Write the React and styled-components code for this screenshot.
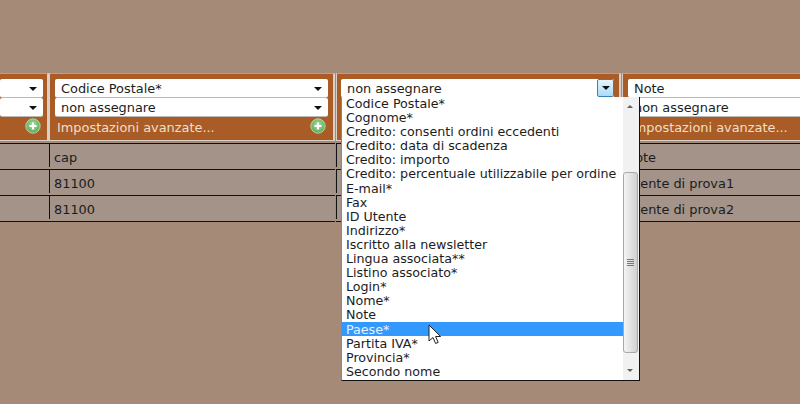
import styled, { createGlobalStyle } from "styled-components";

const GlobalStyle = createGlobalStyle`
  html, body {
    margin: 0;
    padding: 0;
    background: #a58b77;
  }
`;

const Page = styled.div`
  width: 800px;
  height: 404px;
  padding-top: 73px;
  box-sizing: border-box;
  overflow: hidden;
  font-family: "DejaVu Sans", Verdana, sans-serif;
  font-size: 12.9px;
  color: #1c1c1c;
`;

const Table = styled.div`
  position: relative;
  display: grid;
  grid-template-columns: 49px 286px 286px 179px;
  width: 800px;
`;

const Column = styled.div`
  display: flex;
  flex-direction: column;
  min-width: 0;
  overflow: hidden;
  padding-left: ${(p) => (p.$indent ? "1px" : "0")};
`;

const Head = styled.div`
  height: 68px;
  box-sizing: border-box;
  border-top: 1px solid #b0a296;
  border-bottom: 1px solid #d8d0c8;
  border-right: 2px solid #d8d0c8;
  border-left: ${(p) => (p.$first ? "none" : "1px solid #d8d0c8")};
  margin-right: ${(p) => (p.$last ? "-40px" : "0")};
  background: #a95c26;
  padding: 5px 5px 0;
  ${(p) => p.$first && "padding: 5px 4px 0 0;"}
  ${(p) => p.$open && "padding-left: 4px;"}
`;

const Select = styled.div`
  display: flex;
  align-items: center;
  justify-content: space-between;
  height: 18px;
  box-sizing: border-box;
  margin-bottom: 1px;
  padding: 1px 6px 0;
  background: #fff;
  border-radius: 2px;
  box-shadow: 0 1px 0 #bdb8b4;
  white-space: nowrap;
  overflow: hidden;
`;

const Caret = styled.span`
  margin-left: auto;
  width: 0;
  height: 0;
  border-left: 4px solid transparent;
  border-right: 4px solid transparent;
  border-top: 4px solid #111;
`;

const OpenButton = styled.span`
  display: flex;
  align-items: center;
  justify-content: center;
  width: 17px;
  height: 18px;
  margin: -1px -6px 0 auto;
  border: 1px solid #3c7fb1;
  border-radius: 2px;
  box-sizing: border-box;
  background: linear-gradient(#e6f5fc, #a9dbf6);

  ${Caret} {
    margin-left: 0;
  }
`;

const Advanced = styled.div`
  display: flex;
  align-items: center;
  justify-content: space-between;
  height: 20px;
  padding: 0 2px;
  color: #f1dfc9;
  white-space: nowrap;

  svg {
    margin: -2px 0 0 auto;
  }
`;

const Rows = styled.div`
  padding-top: 2px;
  border-bottom: 1px solid #111;
`;

const Cell = styled.div`
  height: 26px;
  box-sizing: border-box;
  padding: 2px 0 0 5px;
  display: flex;
  align-items: center;
  background: ${(p) =>
    p.$first
      ? "#a39389"
      : "linear-gradient(#111, #111) left top / 1px calc(100% - 2px) no-repeat, #a39389"};
  border-top: 1px solid #111;
  white-space: nowrap;
`;

const Dropdown = styled.div`
  position: absolute;
  left: 341px;
  top: 24px;
  width: 299px;
  height: 284px;
  box-sizing: border-box;
  display: flex;
  background: #fff;
  border: 1px solid #111;
  border-top: none;
  border-left-color: #888;
  font-size: 12.66px;
`;

const List = styled.div`
  flex: 1;
  min-width: 0;
  margin-top: -1px;
`;

const Item = styled.div`
  height: 14.1px;
  line-height: 16px;
  padding-left: 4px;
  white-space: nowrap;
  background: ${(p) => (p.$active ? "#3399ff" : "transparent")};
  color: ${(p) => (p.$active ? "#e8f2ff" : "#1c1c1c")};
`;

const Scrollbar = styled.div`
  position: relative;
  width: 16px;
  background: #f1f1f1;
`;

const Arrow = styled.span`
  position: absolute;
  left: 4px;
  ${(p) => (p.$up ? "top: 8px;" : "bottom: 8px;")}
  width: 0;
  height: 0;
  border-left: 3.5px solid transparent;
  border-right: 3.5px solid transparent;
  ${(p) => (p.$up ? "border-bottom" : "border-top")}: 3.5px solid #606060;
`;

const Thumb = styled.div`
  position: absolute;
  left: 0;
  right: 1px;
  top: 75px;
  height: 181px;
  border: 1px solid #a8a8a8;
  border-radius: 3px;
  box-sizing: border-box;
  background: linear-gradient(90deg, #f4f4f4, #d0d0d0);
  display: flex;
  flex-direction: column;
  align-items: center;
  justify-content: center;
  gap: 1px;
`;

const Grip = styled.span`
  width: 7px;
  height: 1px;
  background: #777;
`;

const Cursor = styled.svg`
  position: absolute;
  left: 428px;
  top: 251px;
`;

const PlusIcon = () => (
  <svg width="16" height="16" viewBox="0 0 16 16">
    <defs>
      <radialGradient id="plusg" cx="50%" cy="40%" r="60%">
        <stop offset="0" stopColor="#a5dc9c" />
        <stop offset="1" stopColor="#5aaa58" />
      </radialGradient>
    </defs>
    <circle cx="8" cy="8" r="7.2" fill="url(#plusg)" stroke="#c8e4bf" strokeWidth="0.8" />
    <path d="M8 4.500v7M4.500 8h7" stroke="#fff" strokeWidth="2.2" />
  </svg>
);

const options = [
  "Codice Postale*",
  "Cognome*",
  "Credito: consenti ordini eccedenti",
  "Credito: data di scadenza",
  "Credito: importo",
  "Credito: percentuale utilizzabile per ordine",
  "E-mail*",
  "Fax",
  "ID Utente",
  "Indirizzo*",
  "Iscritto alla newsletter",
  "Lingua associata**",
  "Listino associato*",
  "Login*",
  "Nome*",
  "Note",
  "Paese*",
  "Partita IVA*",
  "Provincia*",
  "Secondo nome",
];

const columns = [
  { first: true, head: "", cells: ["", "", ""] },
  { head: "Codice Postale*", cells: ["cap", "81100", "81100"] },
  { head: "non assegnare", open: true, indent: true, cells: ["", "", ""] },
  { head: "Note", last: true, indent: true, cells: ["note", "utente di prova1", "utente di prova2"] },
];

export default function App() {
  return (
    <Page>
      <GlobalStyle />
      <Table>
        {columns.map((col, i) => (
          <Column key={i} $indent={col.indent}>
            <Head $first={col.first} $last={col.last} $open={col.open}>
              <Select>
                {col.head}
                {col.open ? (
                  <OpenButton>
                    <Caret />
                  </OpenButton>
                ) : (
                  <Caret />
                )}
              </Select>
              <Select>
                {!col.first && !col.open && "non assegnare"}
                <Caret />
              </Select>
              {!col.open && (
                <Advanced>
                  {!col.first && "Impostazioni avanzate..."}
                  {!col.last && <PlusIcon />}
                </Advanced>
              )}
            </Head>
            <Rows>
              {col.cells.map((c, j) => (
                <Cell key={j} $first={col.first}>
                  {c}
                </Cell>
              ))}
            </Rows>
          </Column>
        ))}
        <Dropdown>
          <List>
            {options.map((o) => (
              <Item key={o} $active={o === "Paese*"}>
                {o}
              </Item>
            ))}
          </List>
          <Scrollbar>
            <Arrow $up />
            <Thumb>
              <Grip />
              <Grip />
              <Grip />
              <Grip />
            </Thumb>
            <Arrow />
          </Scrollbar>
        </Dropdown>
        <Cursor width="14" height="22" viewBox="0 0 14 22">
          <path
            d="M1 1v16l4-3.500 2.600 6 2.600-1.100-2.600-5.900h5z"
            fill="#fff"
            stroke="#222"
            strokeWidth="1"
            strokeLinejoin="round"
          />
        </Cursor>
      </Table>
    </Page>
  );
}
